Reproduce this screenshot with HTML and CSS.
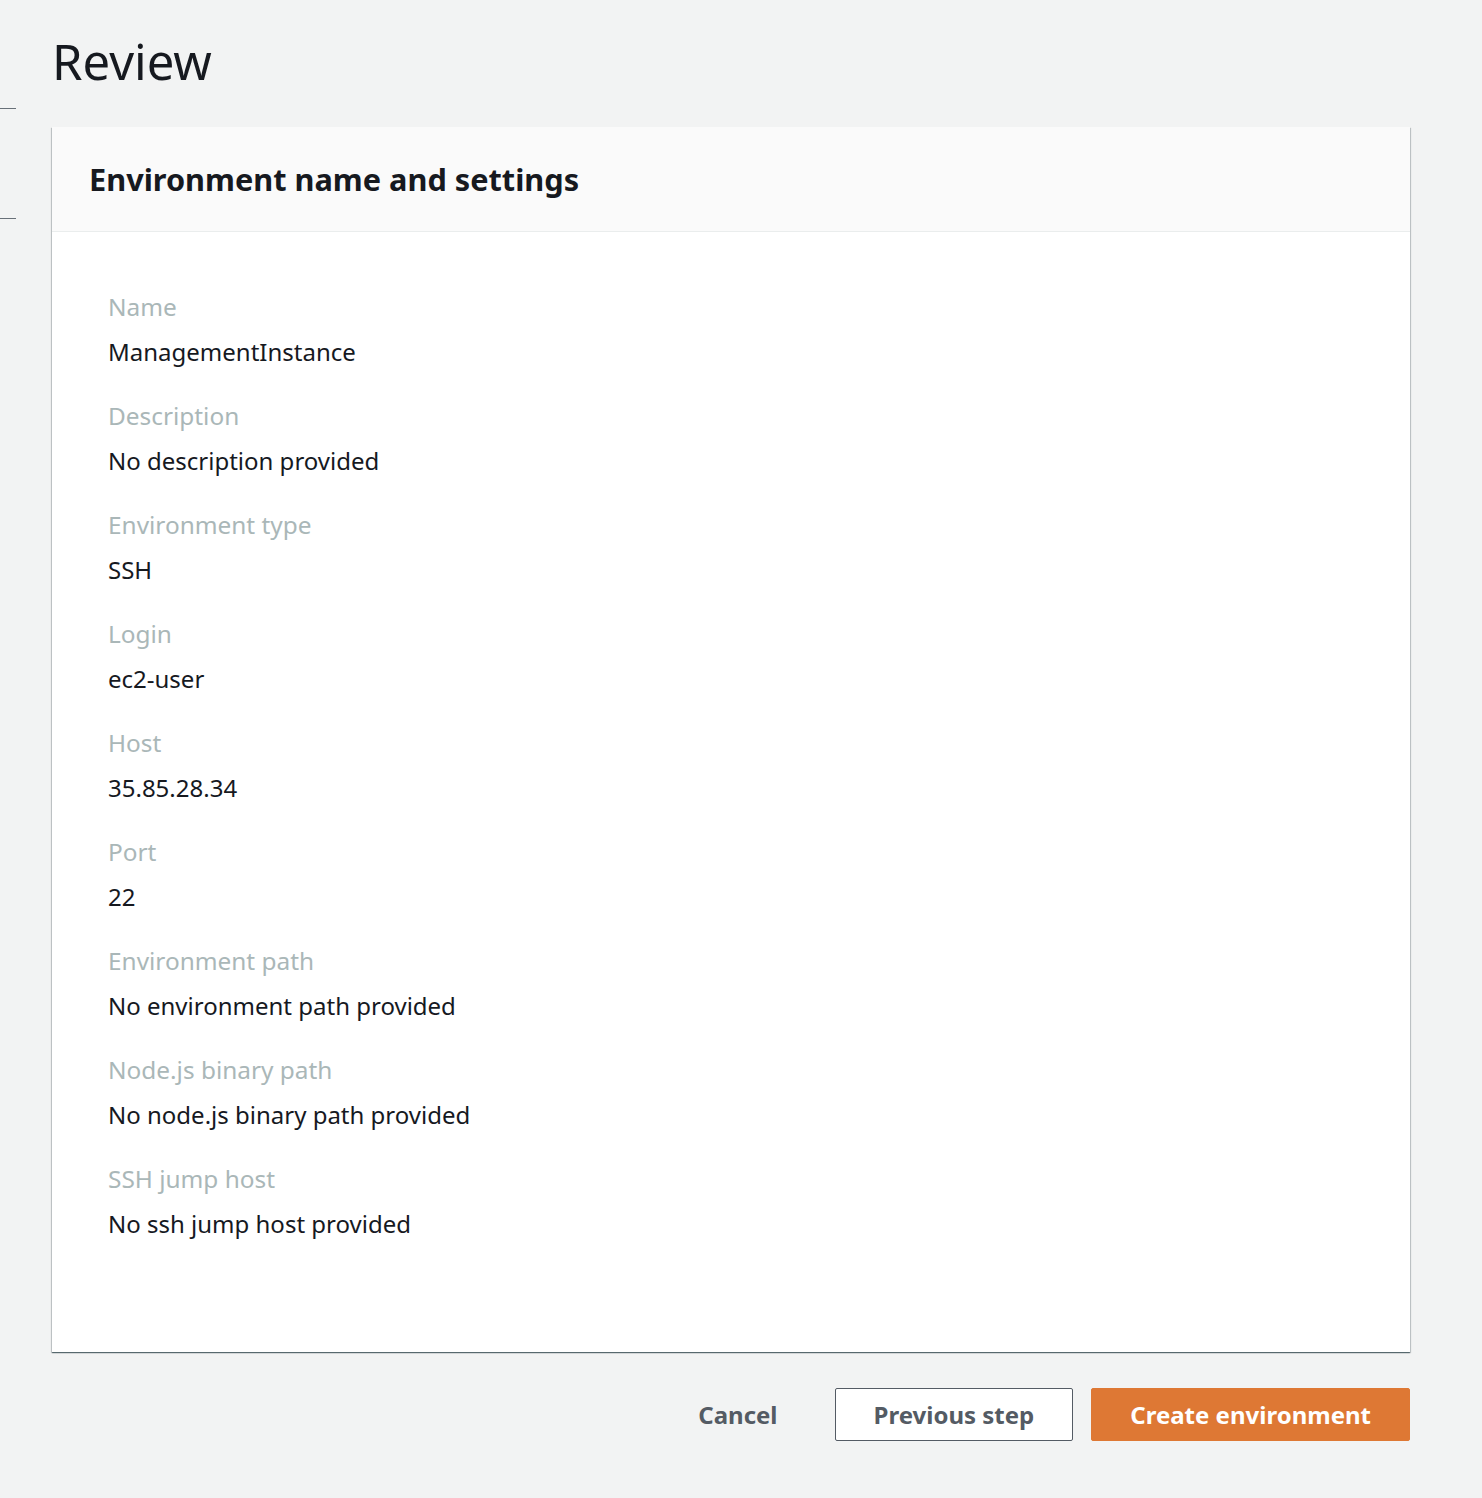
FILE: index.html
```html
<!DOCTYPE html>
<html lang="en">
<head>
    <meta charset="UTF-8">
    <meta name="viewport" content="width=device-width, initial-scale=1.0">
    <title>Review</title>
    <link rel="stylesheet" href="styles.css">
</head>
<body>
    <div class="layout">
        <div class="side-nav">
            <div class="nav-line first"></div>
            <div class="nav-line"></div>
        </div>
        <div class="main-content">
            <h1 class="page-title">Review</h1>
            <div class="card">
                <div class="card-header">
                    <h2>Environment name and settings</h2>
                </div>
                <div class="card-body">
                    <dl class="fields">
                        <div class="field">
                            <dt>Name</dt>
                            <dd>ManagementInstance</dd>
                        </div>
                        <div class="field">
                            <dt>Description</dt>
                            <dd>No description provided</dd>
                        </div>
                        <div class="field">
                            <dt>Environment type</dt>
                            <dd>SSH</dd>
                        </div>
                        <div class="field">
                            <dt>Login</dt>
                            <dd>ec2-user</dd>
                        </div>
                        <div class="field">
                            <dt>Host</dt>
                            <dd>35.85.28.34</dd>
                        </div>
                        <div class="field">
                            <dt>Port</dt>
                            <dd>22</dd>
                        </div>
                        <div class="field">
                            <dt>Environment path</dt>
                            <dd>No environment path provided</dd>
                        </div>
                        <div class="field">
                            <dt>Node.js binary path</dt>
                            <dd>No node.js binary path provided</dd>
                        </div>
                        <div class="field">
                            <dt>SSH jump host</dt>
                            <dd>No ssh jump host provided</dd>
                        </div>
                    </dl>
                </div>
            </div>
            <div class="actions">
                <button class="btn btn-link">Cancel</button>
                <button class="btn btn-normal">Previous step</button>
                <button class="btn btn-primary">Create environment</button>
            </div>
        </div>
    </div>
</body>
</html>
```

FILE: styles.css
```css
body {
    font-family: "Noto Sans", "Open Sans", Arial, sans-serif;
    margin: 0;
    padding: 0;
    background-color: #f2f3f3;
    color: #16191f;
}
.layout {
    display: flex;
    min-height: 100vh;
}
.side-nav {
    width: 16px;
    flex-shrink: 0;
    padding-top: 108px;
}
.nav-line {
    height: 1px;
    background-color: #687078;
}
.nav-line + .nav-line {
    margin-top: 109px;
}
.main-content {
    flex-grow: 1;
    padding: 0 72px 0 36px;
}
.page-title {
    margin: 0;
    padding: 30px 0 34px 0;
    font-size: 49px;
    font-weight: 400;
    line-height: 63px;
    color: #16191f;
}
.card {
    background-color: #fff;
    box-shadow: 0 1px 1px 0 rgba(0, 28, 36, 0.5), 1px 1px 1px 0 rgba(0, 28, 36, 0.15), -1px 1px 1px 0 rgba(0, 28, 36, 0.15);
}
.card-header {
    background-color: #fafafa;
    border-bottom: 1px solid #eaeded;
    padding: 33px 37px 32px;
}
.card-header h2 {
    margin: 0;
    font-size: 30.7px;
    font-weight: 700;
    line-height: 39px;
}
.card-body {
    padding: 59px 56px 112px;
}
.fields {
    margin: 0;
}
.field {
    margin-bottom: 32px;
}
.field:last-child {
    margin-bottom: 0;
}
.fields dt {
    font-size: 24.4px;
    line-height: 32px;
    color: #aab7b8;
}
.fields dd {
    margin: 13px 0 0;
    font-size: 24px;
    line-height: 32px;
    color: #16191f;
}
.actions {
    display: flex;
    justify-content: flex-end;
    gap: 18px;
    margin-top: 36px;
}
.btn {
    font-family: "Noto Sans", "Open Sans", Arial, sans-serif;
    font-size: 24px;
    font-weight: 700;
    height: 53px;
    padding: 0 38px;
    border-radius: 2px;
    border: 1px solid transparent;
    cursor: pointer;
}
.btn-link {
    background: none;
    color: #545b64;
}
.btn-normal {
    background-color: #fff;
    border-color: #545b64;
    color: #545b64;
}
.btn-primary {
    background-color: #de7834;
    border-color: #de7834;
    color: #fff;
}
```
